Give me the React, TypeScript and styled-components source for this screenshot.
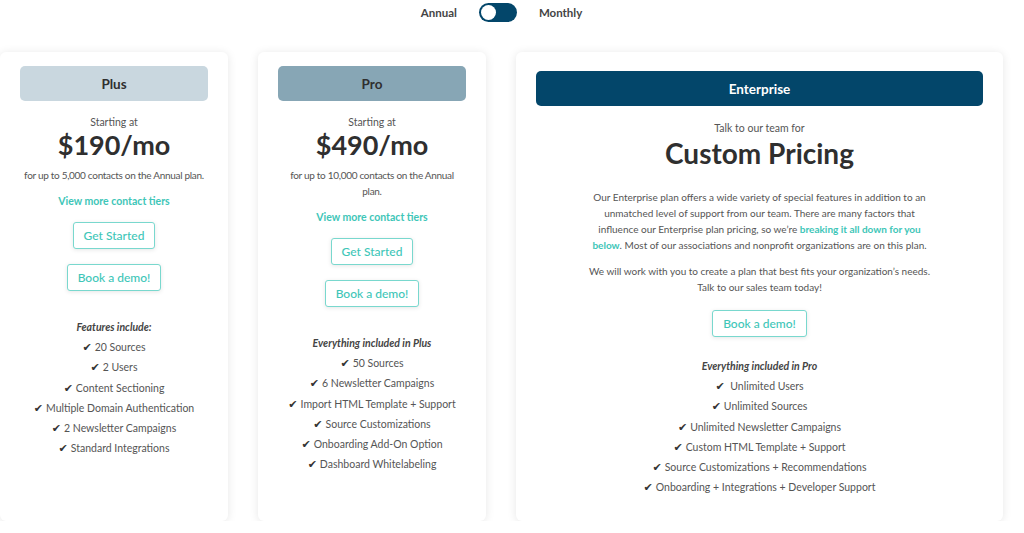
import React, { useState } from 'react'
import styled, { createGlobalStyle } from 'styled-components'

const GlobalStyle = createGlobalStyle`
  body {
    margin: 0;
    background: #ffffff;
    font-family: Lato, "Open Sans", "DejaVu Sans", sans-serif;
    color: #555555;
  }
`

const Teal = '#3ec6b8'
const Navy = '#03466a'

const Page = styled.div`
  width: 1003px;
  padding-top: 3px;
`

const ToggleRow = styled.div`
  display: flex;
  align-items: center;
  justify-content: center;
  gap: 22px;
  height: 19px;
`

const ToggleLabel = styled.span`
  font-size: 11.5px;
  font-weight: 700;
  color: #444444;
`

const Switch = styled.button<{ $on: boolean }>`
  position: relative;
  width: 38px;
  height: 19px;
  border: 0;
  padding: 0;
  border-radius: 10px;
  background: ${Navy};
  cursor: pointer;

  &::after {
    content: '';
    position: absolute;
    top: 2px;
    left: ${(p) => (p.$on ? '21px' : '2px')};
    width: 15px;
    height: 15px;
    border-radius: 50%;
    background: #ffffff;
  }
`

const Cards = styled.div`
  display: grid;
  grid-template-columns: 228px 228px 487px;
  gap: 30px;
  margin-top: 30px;
`

const Card = styled.div<{ $top: number }>`
  display: flex;
  flex-direction: column;
  align-items: center;
  text-align: center;
  height: 469px;
  box-sizing: border-box;
  padding: ${(p) => p.$top}px 20px 0;
  background: #ffffff;
  border-radius: 6px;
  box-shadow: 0 1px 10px rgba(0, 0, 0, 0.1);
`

const PlanHeader = styled.div<{ $bg: string; $fg: string }>`
  width: 100%;
  height: 35px;
  border-radius: 5px;
  background: ${(p) => p.$bg};
  color: ${(p) => p.$fg};
  display: flex;
  align-items: center;
  justify-content: center;
  font-size: 13.5px;
  font-weight: 700;
`

const Starting = styled.div<{ $mt: number }>`
  margin-top: ${(p) => p.$mt}px;
  font-size: 10.5px;
  line-height: 16px;
  color: #555555;
`

const Price = styled.div`
  font-size: 27px;
  font-weight: 700;
  line-height: 30px;
  color: #2f2f2f;
`

const BigTitle = styled.div`
  font-size: 28px;
  font-weight: 700;
  line-height: 34px;
  color: #2f2f2f;
`

const Desc = styled.div<{ $width: number }>`
  max-width: ${(p) => p.$width}px;
  font-size: 10px;
  letter-spacing: -0.3px;
  line-height: 16px;
  color: #555555;
  margin-top: 7px;
`

const TierLink = styled.a`
  margin-top: 10px;
  font-size: 10.5px;
  line-height: 16px;
  font-weight: 700;
  color: ${Teal};
  text-decoration: none;
`

const OutlineButton = styled.button<{ $mt: number }>`
  margin-top: ${(p) => p.$mt}px;
  height: 27px;
  padding: 0 10px;
  background: #ffffff;
  border: 1px solid #79d8ce;
  border-radius: 3px;
  box-shadow: 0 1px 4px rgba(0, 0, 0, 0.1);
  color: ${Teal};
  font-family: inherit;
  font-size: 12px;
  font-weight: 500;
  cursor: pointer;
`

const Features = styled.ul<{ $mt: number }>`
  list-style: none;
  margin: ${(p) => p.$mt}px 0 0;
  padding: 0;
  font-size: 10.5px;
  color: #555555;

  li {
    height: 20.2px;
    line-height: 20px;
  }
`

const FeatureHead = styled.li`
  font-weight: 700;
  font-style: italic;
  color: #444444;
`

const Check = styled.span`
  font-family: "DejaVu Sans", sans-serif;
  font-size: 11px;
  line-height: 1;
  color: #333333;
  margin-right: 3px;
`

const Copy = styled.p<{ $mt: number }>`
  margin: ${(p) => p.$mt}px 0 0;
  max-width: 345px;
  font-size: 10px;
  line-height: 16px;
  color: #555555;
`

const InlineLink = styled.a`
  color: ${Teal};
  font-weight: 700;
  text-decoration: none;
`

const FeatureList = ({
  title,
  items,
  mt,
}: {
  title: string
  items: string[]
  mt: number
}) => (
  <Features $mt={mt}>
    <FeatureHead>{title}</FeatureHead>
    {items.map((item) => (
      <li key={item}>
        <Check>✔</Check>
        {item}
      </li>
    ))}
  </Features>
)

export default function App() {
  const [monthly, setMonthly] = useState(false)

  return (
    <Page>
      <GlobalStyle />
      <ToggleRow>
        <ToggleLabel>Annual</ToggleLabel>
        <Switch $on={monthly} onClick={() => setMonthly(!monthly)} />
        <ToggleLabel>Monthly</ToggleLabel>
      </ToggleRow>

      <Cards>
        <Card $top={14}>
          <PlanHeader $bg="#c9d7df" $fg="#2f2f2f">
            Plus
          </PlanHeader>
          <Starting $mt={13}>Starting at</Starting>
          <Price>$190/mo</Price>
          <Desc $width={188}>for up to 5,000 contacts on the Annual plan.</Desc>
          <TierLink href="#">View more contact tiers</TierLink>
          <OutlineButton $mt={13}>Get Started</OutlineButton>
          <OutlineButton $mt={15}>Book a demo!</OutlineButton>
          <FeatureList
            mt={26}
            title="Features include:"
            items={[
              '20 Sources',
              '2 Users',
              'Content Sectioning',
              'Multiple Domain Authentication',
              '2 Newsletter Campaigns',
              'Standard Integrations',
            ]}
          />
        </Card>

        <Card $top={14}>
          <PlanHeader $bg="#87a6b5" $fg="#2f2f2f">
            Pro
          </PlanHeader>
          <Starting $mt={13}>Starting at</Starting>
          <Price>$490/mo</Price>
          <Desc $width={175}>for up to 10,000 contacts on the Annual plan.</Desc>
          <TierLink href="#">View more contact tiers</TierLink>
          <OutlineButton $mt={13}>Get Started</OutlineButton>
          <OutlineButton $mt={15}>Book a demo!</OutlineButton>
          <FeatureList
            mt={26}
            title="Everything included in Plus"
            items={[
              '50 Sources',
              '6 Newsletter Campaigns',
              'Import HTML Template + Support',
              'Source Customizations',
              'Onboarding Add-On Option',
              'Dashboard Whitelabeling',
            ]}
          />
        </Card>

        <Card $top={19}>
          <PlanHeader $bg={Navy} $fg="#ffffff">
            Enterprise
          </PlanHeader>
          <Starting $mt={14}>Talk to our team for</Starting>
          <BigTitle>Custom Pricing</BigTitle>
          <Copy $mt={19}>
            Our Enterprise plan offers a wide variety of special features in
            addition to an unmatched level of support from our team. There are
            many factors that influence our Enterprise plan pricing, so we’re{' '}
            <InlineLink href="#">breaking it all down for you</InlineLink>{' '}
            <InlineLink href="#">below</InlineLink>. Most of our associations
            and nonprofit organizations are on this plan.
          </Copy>
          <Copy $mt={10}>
            We will work with you to create a plan that best fits your
            organization’s needs. Talk to our sales team today!
          </Copy>
          <OutlineButton $mt={15}>Book a demo!</OutlineButton>
          <FeatureList
            mt={19}
            title="Everything included in Pro"
            items={[
              ' Unlimited Users',
              'Unlimited Sources',
              'Unlimited Newsletter Campaigns',
              'Custom HTML Template + Support',
              'Source Customizations + Recommendations',
              'Onboarding + Integrations + Developer Support',
            ]}
          />
        </Card>
      </Cards>
    </Page>
  )
}
